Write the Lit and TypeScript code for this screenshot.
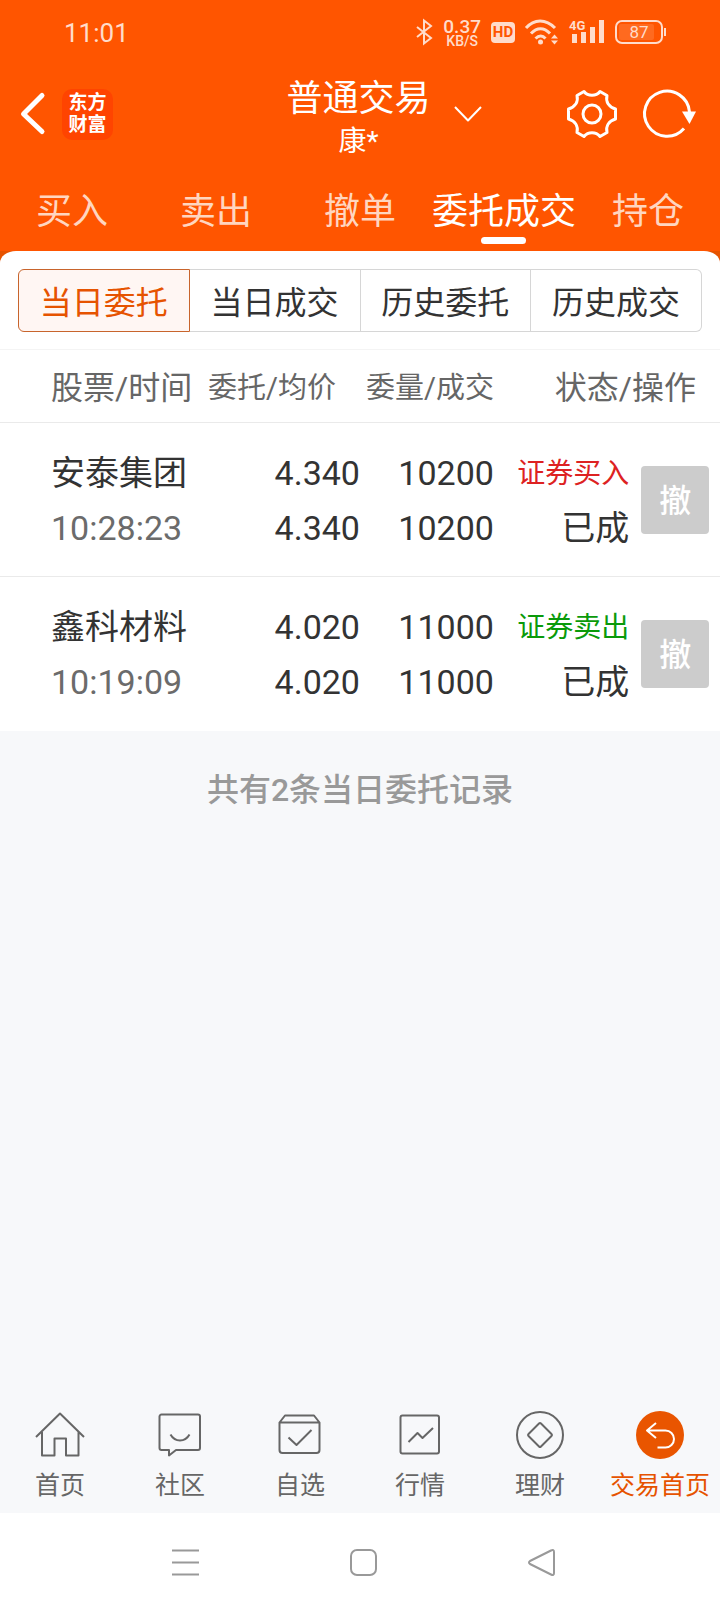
import { LitElement, html, css, svg, nothing } from "lit";
import { customElement, state } from "lit/decorators.js";
import { classMap } from "lit/directives/class-map.js";

interface Order {
  name: string;
  time: string;
  price: string;
  average: string;
  quantity: string;
  filled: string;
  side: "buy" | "sell";
  action: string;
  status: string;
}

const TABS = ["买入", "卖出", "撤单", "委托成交", "持仓"];
const RANGES = ["当日委托", "当日成交", "历史委托", "历史成交"];

const ORDERS: Order[] = [
  { name: "安泰集团", time: "10:28:23", price: "4.340", average: "4.340", quantity: "10200", filled: "10200", side: "buy", action: "证券买入", status: "已成" },
  { name: "鑫科材料", time: "10:19:09", price: "4.020", average: "4.020", quantity: "11000", filled: "11000", side: "sell", action: "证券卖出", status: "已成" },
];

const NAV = [
  {
    label: "首页",
    icon: svg`<path d="M0 25 24 1.500 48 25M6 20V43.500H18.500V26.500H30V43.500H42.500V20"/>`,
  },
  {
    label: "社区",
    icon: svg`<path d="M5.500 2.500H42A2 2 0 0 1 44 4.500V36A2 2 0 0 1 42 38H20L13 43.500V38H5.500A2 2 0 0 1 3.500 36V4.500A2 2 0 0 1 5.500 2.500ZM14.500 22.500C19 30.500 29 30.500 33.500 22.500"/>`,
  },
  {
    label: "自选",
    icon: svg`<path d="M3.500 10.500 9 3.500H38L43.500 10.500V38A3 3 0 0 1 40.500 41H6.500A3 3 0 0 1 3.500 38ZM3.500 10.500H43.500M12.500 25.500 20.500 33 35.500 18"/>`,
  },
  {
    label: "行情",
    icon: svg`<rect x="4.500" y="3.500" width="38.500" height="38" rx="2"/><path d="M12.500 30 21.500 21 26.500 26 37 16"/>`,
  },
  {
    label: "理财",
    icon: svg`<circle cx="24" cy="23" r="23"/><path d="M23 11.500Q24 10.500 25 11.500L35.500 22Q36.500 23 35.500 24L25 34.500Q24 35.500 23 34.500L12.500 24Q11.500 23 12.500 22Z"/>`,
  },
  {
    label: "交易首页",
    current: true,
    icon: svg`<circle class="disc" cx="24" cy="23" r="24"/><path class="on-disc" d="M20 11 11 18.500 20 26M11.500 18.500H29.500A8.500 8.500 0 0 1 29.500 35.500H21.500"/>`,
  },
];

@customElement("app-status-bar")
class AppStatusBar extends LitElement {
  static styles = css`
    :host {
      display: flex;
      align-items: center;
      justify-content: space-between;
      height: 64px;
      padding: 0 53px 0 64px;
      color: #ffdccb;
    }
    .clock { font-size: 26px; line-height: 34px; padding-top: 2px; }
    .indicators { display: flex; align-items: center; gap: 10px; }
    .speed { display: grid; text-align: center; font-weight: 500; }
    .rate { font-size: 19px; line-height: 17px; }
    .unit { font-size: 14px; line-height: 12px; }
    .hd {
      width: 24px;
      border-radius: 4px;
      background: #ffdccb;
      color: #ff5500;
      font-size: 15px;
      font-weight: 700;
      line-height: 21px;
      text-align: center;
    }
    svg { display: block; overflow: visible; }
    .line { fill: none; stroke: #ffdccb; stroke-width: 2; }
    .thick { stroke-width: 3; }
    .solid { fill: #ffdccb; }
    .charge { fill: #ff6a1f; }
    .net { font-size: 13px; font-weight: 700; fill: #ffdccb; }
    .level { font-size: 17px; fill: #ffdccb; text-anchor: middle; }
  `;

  render() {
    return html`
      <time class="clock">11:01</time>
      <div class="indicators">
        <svg width="17" height="26" viewBox="0 0 17 26" aria-label="蓝牙">
          <path class="line" d="M1 8 15 19 8 24.500V1.500L15 7 1 18" />
        </svg>
        <div class="speed"><span class="rate">0.37</span><span class="unit">KB/S</span></div>
        <span class="hd">HD</span>
        <svg width="34" height="26" viewBox="0 0 34 26" aria-label="无线网络">
          <path class="line thick" d="M1 9C9-.5 21-.5 30 9M6 14.500C12 8 19 8 25 14.500M10.500 19.500C14 16 17.500 16 20.500 19.500" />
          <circle class="solid" cx="15.500" cy="23" r="2.500" />
          <path class="solid" d="M26 19.500 29.500 15.500 33 19.500ZM26 21.500 29.500 25.500 33 21.500Z" />
        </svg>
        <svg width="36" height="24" viewBox="0 0 36 24" aria-label="信号">
          <path class="solid" d="M3 14H8V23H3ZM12 12H17V23H12ZM21 7H26V23H21ZM30 0H35V23H30Z" />
          <text class="net" x="0" y="10">4G</text>
        </svg>
        <svg width="52" height="24" viewBox="0 0 52 24" aria-label="电量">
          <rect class="line" x="1" y="1" width="46" height="22" rx="6" />
          <rect class="charge" x="4" y="4" width="35" height="16" rx="2" />
          <path class="line" d="M50 8V16" />
          <text class="level" x="24" y="18">87</text>
        </svg>
      </div>
    `;
  }
}

@customElement("order-table")
class OrderTable extends LitElement {
  static styles = css`
    :host { display: block; background: #fff; }
    table {
      width: 100%;
      border-collapse: collapse;
      table-layout: fixed;
      font-size: 34px;
      line-height: 55px;
      color: #333;
      white-space: nowrap;
    }
    .c-name { width: 27%; }
    .c-price { width: 23%; }
    .c-qty { width: 18.600%; }
    .c-state { width: 18.800%; }
    thead tr { height: 73px; }
    tbody tr { height: 154px; }
    th {
      padding: 4px 0 0;
      color: #666;
      font-size: 29px;
      font-weight: 400;
      text-align: right;
      border-top: 1px solid #f4f4f4;
      border-bottom: 1px solid #eaeaea;
    }
    th.outer { font-size: 32px; }
    th.avg { padding-right: 24px; }
    th.ops { padding-right: 24px; }
    td {
      padding: 2px 0 0;
      text-align: right;
      border-bottom: 1px solid #eaeaea;
    }
    td:last-child { padding-top: 0; }
    tr:last-child td { border-bottom: 0; }
    th.name, td.name { padding-left: 51px; text-align: left; }
    .line { display: block; }
    .time { color: #6b6b6b; }
    .side { font-size: 28px; }
    .buy { color: #dd2222; }
    .sell { color: #0a9a0a; }
    .cancel {
      display: block;
      width: 68px;
      height: 68px;
      margin-left: 12px;
      padding: 2px 0 0;
      border: 0;
      border-radius: 4px;
      background: #ccc;
      color: #fff;
      font: inherit;
      font-size: 32px;
      font-weight: 500;
      line-height: 66px;
    }
  `;

  render() {
    return html`
      <table>
        <colgroup>
          <col class="c-name" /><col class="c-price" /><col class="c-qty" /><col class="c-state" /><col />
        </colgroup>
        <thead>
          <tr>
            <th class="outer name" scope="col">股票/时间</th>
            <th class="avg" scope="col">委托/均价</th>
            <th scope="col">委量/成交</th>
            <th class="outer ops" scope="colgroup" colspan="2">状态/操作</th>
          </tr>
        </thead>
        <tbody>
          ${ORDERS.map(
            (o) => html`
              <tr>
                <td class="name"><span class="line">${o.name}</span><span class="line time">${o.time}</span></td>
                <td><span class="line">${o.price}</span><span class="line">${o.average}</span></td>
                <td><span class="line">${o.quantity}</span><span class="line">${o.filled}</span></td>
                <td>
                  <span class="line side ${o.side}">${o.action}</span><span class="line">${o.status}</span>
                </td>
                <td><button class="cancel" disabled>撤</button></td>
              </tr>
            `
          )}
        </tbody>
      </table>
    `;
  }
}

@customElement("app-root")
class AppRoot extends LitElement {
  static styles = css`
    :host {
      display: flex;
      flex-direction: column;
      min-height: 100vh;
      background: #f7f8fa;
      font-family: Roboto, "Noto Sans CJK SC", sans-serif;
      color: #333;
    }
    button { padding: 0; border: 0; background: none; font: inherit; color: inherit; cursor: pointer; }
    svg { display: block; overflow: visible; fill: none; }
    .top { background: #ff5500; color: #fff; }
    .bar {
      display: grid;
      grid-template-columns: 1fr auto 1fr;
      align-items: center;
      height: 100px;
      padding: 0 23px 0 20px;
    }
    .left, .right { display: flex; align-items: center; }
    .left { gap: 17px; }
    .logo {
      display: grid;
      place-content: center;
      width: 51px;
      height: 51px;
      border-radius: 10px;
      background: #ff4400;
      font-size: 19px;
      font-weight: 700;
      line-height: 22px;
      text-align: center;
    }
    .logo span { display: block; }
    .heading { padding-top: 12px; text-align: center; }
    h1 { margin: 0; font-size: 36px; font-weight: 400; line-height: 44px; }
    .account { margin: 0; font-size: 28px; line-height: 42px; }
    .more { margin-left: 23px; }
    .settings { margin-left: auto; margin-right: 26px; }
    .stroke { stroke: #fff; stroke-width: 3; stroke-linejoin: round; }
    .back { stroke-width: 5; stroke-linecap: round; }
    .thin { stroke-width: 2; }
    .fill { fill: #fff; }
    .tabs { display: grid; grid-template-columns: repeat(5, 1fr); height: 87px; }
    .tab {
      display: grid;
      grid-template-rows: 73px 7px;
      justify-items: center;
      align-content: start;
      font-size: 36px;
      line-height: 97px;
      white-space: nowrap;
      color: #ffd6c0;
    }
    .tab.active { color: #fff; }
    .tab.active::after { content: ""; width: 45px; border-radius: 4px; background: #fff; }
    .sheet-edge { background: linear-gradient(#e65300 12px, #fff 12px); }
    .ranges {
      display: flex;
      padding: 18px 18px 17px;
      border-radius: 16px 16px 0 0 / 12px 12px 0 0;
      background: #fff;
    }
    .range {
      box-sizing: border-box;
      flex: 1;
      height: 63px;
      padding-top: 5px;
      border: 1px solid #d6d6d6;
      border-left-width: 0;
      font-size: 32px;
      line-height: 56px;
    }
    .range:first-child { border-left-width: 1px; border-radius: 6px 0 0 6px; }
    .range:last-child { border-radius: 0 6px 6px 0; }
    .range.active { border-color: #c8642c; background: #fff6f3; color: #e65300; }
    .summary { margin: 0; padding-top: 35px; color: #999; font-size: 32px; font-weight: 500; line-height: 48px; text-align: center; }
    .nav {
      display: grid;
      grid-template-columns: repeat(6, 1fr);
      margin-top: auto;
      height: 101px;
      padding-top: 2px;
    }
    .nav-item {
      display: grid;
      justify-items: center;
      align-content: start;
      color: #666;
      font-size: 25px;
      line-height: 48px;
      text-decoration: none;
      white-space: nowrap;
    }
    .nav-item svg { stroke: #666; stroke-width: 2; stroke-linejoin: round; }
    .nav-item.active { color: #e65300; }
    .nav-item .disc { fill: #e95500; stroke: none; }
    .nav-item .on-disc { stroke: #fff; }
    .system {
      display: flex;
      align-items: center;
      justify-content: center;
      gap: 151px;
      height: 99px;
      padding-left: 6px;
      background: #fff;
    }
    .system svg { stroke: #999; stroke-width: 2; stroke-linejoin: round; }
  `;

  @state() private tab = 3;
  @state() private range = 0;

  render() {
    return html`
      <header class="top">
        <app-status-bar></app-status-bar>
        <div class="bar">
          <div class="left">
            <button aria-label="返回">
              <svg width="25" height="42" viewBox="0 0 25 42"><path class="stroke back" d="M22 2.500 3.500 21 22 38.500" /></svg>
            </button>
            <div class="logo"><span>东方</span><span>财富</span></div>
          </div>
          <div class="heading">
            <h1>普通交易</h1>
            <p class="account">康*</p>
          </div>
          <div class="right">
            <button class="more" aria-label="切换账户">
              <svg width="28" height="16" viewBox="0 0 28 16"><path class="stroke thin" d="M1 1 14 14.500 27 1" /></svg>
            </button>
            <button class="settings" aria-label="设置">
              <svg width="50" height="50" viewBox="0 0 50 50">
                <path class="stroke" d="M17 2.500C21 7.500 29 7.500 33 2.500L40 6.500C38.500 13 42 18 48.500 20V30C42 32 38.500 37 40 43.500L33 47.500C29 42.500 21 42.500 17 47.500L10 43.500C11.500 37 8 32 1.500 30V20C8 18 11.500 13 10 6.500Z" />
                <circle class="stroke" cx="25" cy="25" r="9" />
              </svg>
            </button>
            <button aria-label="刷新">
              <svg width="54" height="50" viewBox="0 0 54 50">
                <path class="stroke" d="M46.500 23A22.500 22.500 0 1 0 41 39.500" />
                <path class="fill" d="M39 22.500H53L46.500 35Z" />
              </svg>
            </button>
          </div>
        </div>
        <nav class="tabs">
          ${TABS.map(
            (t, i) => html`<button class=${classMap({ tab: true, active: i === this.tab })} @click=${() => (this.tab = i)}>${t}</button>`
          )}
        </nav>
      </header>
      <div class="sheet-edge">
        <div class="ranges">
          ${RANGES.map(
            (r, i) => html`<button class=${classMap({ range: true, active: i === this.range })} @click=${() => (this.range = i)}>${r}</button>`
          )}
        </div>
      </div>
      <order-table></order-table>
      <p class="summary">共有${ORDERS.length}条当日委托记录</p>
      <nav class="nav">
        ${NAV.map(
          (n) => html`
            <a class=${classMap({ "nav-item": true, active: !!n.current })} href="#" aria-current=${n.current ? "page" : nothing}>
              <svg width="48" height="50" viewBox="0 0 48 50">${n.icon}</svg>
              ${n.label}
            </a>
          `
        )}
      </nav>
      <div class="system">
        <button aria-label="最近任务">
          <svg width="27" height="27" viewBox="0 0 27 27"><path d="M0 1.500H27M0 13.500H27M0 25.500H27" /></svg>
        </button>
        <button aria-label="主屏幕">
          <svg width="27" height="27" viewBox="0 0 27 27"><rect x="1" y="1" width="25" height="25" rx="6" /></svg>
        </button>
        <button aria-label="后退">
          <svg width="27" height="27" viewBox="0 0 27 27"><path d="M23 1.500Q26 0 26 3V24Q26 27 23 25.500L2 15Q0 13.500 2 12Z" /></svg>
        </button>
      </div>
    `;
  }
}
